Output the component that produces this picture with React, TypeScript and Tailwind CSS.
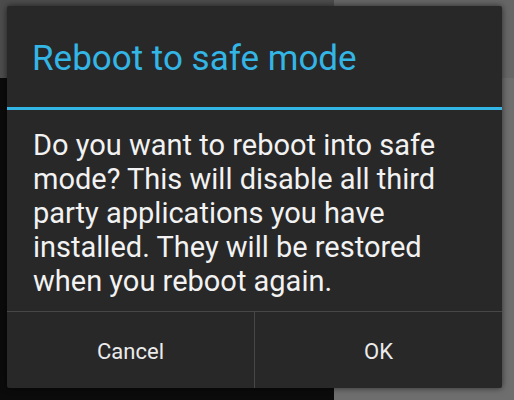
const App = () => {
  return (
    <div className="relative w-[514px] h-[400px] overflow-hidden bg-[#0b0b0b] font-['Roboto','Liberation_Sans',sans-serif]">
      {/* Dimmed screen behind the dialog */}
      <div className="flex h-full">
        <div className="w-[334px] flex flex-col">
          <div className="h-[78px] bg-[#4c4c4c]" />
          <div className="flex-1 bg-[#0b0b0b]" />
        </div>
        <div className="flex-1 flex flex-col">
          <div className="h-[78px] bg-[#666666]" />
          <div className="flex-1 bg-[#6e6e6e]" />
        </div>
      </div>

      {/* Dialog */}
      <div className="absolute left-[7px] top-[6px] w-[495px] h-[382px] flex flex-col bg-[#282828] rounded-[2px] shadow-[0_0_6px_rgba(0,0,0,0.6)]">
        <div className="h-[101px] flex items-center pl-[25px] pt-[3px]">
          <span className="text-[35px] leading-none text-[#33b5e5]">Reboot to safe mode</span>
        </div>
        <div className="h-[3px] bg-[#33b5e5]" />
        <div className="flex-1 pl-[26px] pt-[18px] text-[29px] leading-[34px] text-[#f2f2f2] whitespace-nowrap">
          Do you want to reboot into safe
          <br />
          mode? This will disable all third
          <br />
          party applications you have
          <br />
          installed. They will be restored
          <br />
          when you reboot again.
        </div>
        <div className="h-[77px] flex border-t border-[#474747]">
          <button className="flex-1 flex items-center justify-center pt-[3px] text-[22px] text-[#ebebeb]">
            Cancel
          </button>
          <div className="w-px bg-[#474747]" />
          <button className="flex-1 flex items-center justify-center pt-[3px] text-[22px] text-[#ebebeb]">
            OK
          </button>
        </div>
      </div>
    </div>
  );
};

export default App;
